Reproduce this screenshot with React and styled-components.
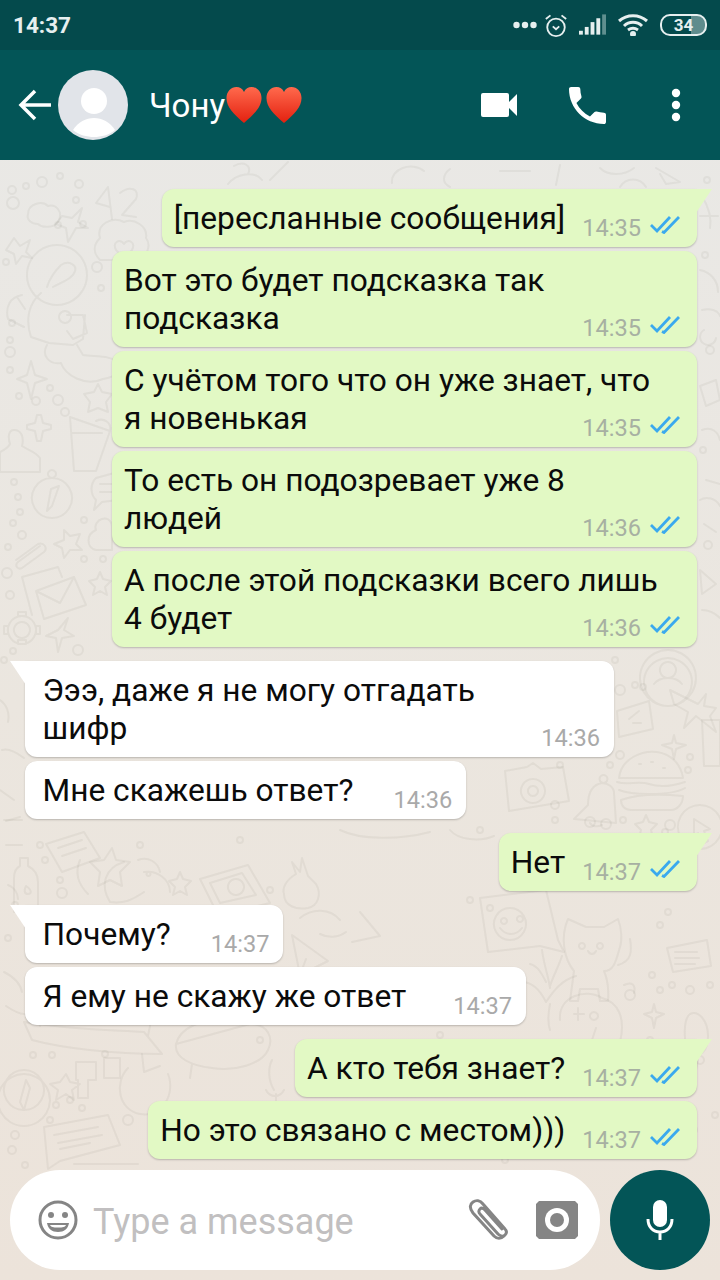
import React from 'react';
import styled, { createGlobalStyle } from 'styled-components';

const GlobalStyle = createGlobalStyle`
  html, body {
    margin: 0;
    padding: 0;
  }
  body {
    width: 720px;
    height: 1280px;
    overflow: hidden;
    font-family: Roboto, "Noto Sans", sans-serif;
  }
`;

const Screen = styled.div`
  position: relative;
  width: 720px;
  height: 1280px;
  display: flex;
  flex-direction: column;
  overflow: hidden;
  background: linear-gradient(180deg, #e9e9e7 0%, #ebe6df 55%, #ece3da 100%);
`;

const StatusBar = styled.div`
  height: 50px;
  flex: none;
  display: flex;
  align-items: center;
  justify-content: space-between;
  padding: 0 13px;
  background: #044a4c;
  color: #e6efef;
  box-sizing: border-box;
`;

const Clock = styled.div`
  font-size: 22.500px;
  font-weight: 700;
`;

const StatusIcons = styled.div`
  display: flex;
  align-items: center;
`;

const Battery = styled.div`
  width: 43px;
  height: 18px;
  margin-left: 12px;
  border: 2px solid #e6efef;
  border-radius: 10px;
  display: flex;
  align-items: center;
  justify-content: center;
  font-size: 17px;
  font-weight: 700;
  background: linear-gradient(90deg, transparent 68%, rgba(230, 239, 239, .4) 68%);
`;

const Header = styled.header`
  height: 110px;
  flex: none;
  display: flex;
  align-items: center;
  padding: 0 39px 0 18px;
  box-sizing: border-box;
  background: #035557;
  color: #fff;
`;

const Avatar = styled.div`
  width: 70px;
  height: 70px;
  margin-left: 7px;
  border-radius: 50%;
  overflow: hidden;
  flex: none;
`;

const Title = styled.div`
  display: flex;
  align-items: center;
  margin-left: 21px;
  font-size: 33px;
  flex: 1;
`;

const HeaderActions = styled.div`
  display: flex;
  align-items: center;
  gap: 52px;
`;

const MoreIcon = styled.svg`
  margin-left: 13px;
`;

const Doodles = styled.svg`
  position: absolute;
  left: 0;
  top: 0;
  pointer-events: none;
`;

const Chat = styled.main`
  position: relative;
  flex: 1;
  display: flex;
  flex-direction: column;
  gap: 4px;
  padding: 29px 23px 0 25px;
  box-sizing: border-box;
`;

const Bubble = styled.div`
  position: relative;
  display: flex;
  flex-direction: ${p => (p.$wide ? 'column' : 'row')};
  align-items: flex-end;
  align-self: ${p => (p.$out ? 'flex-end' : 'flex-start')};
  width: ${p => (p.$wide ? `${p.$wide}px` : 'auto')};
  box-sizing: border-box;
  margin-top: ${p => (p.$gap ? '10px' : '0')};
  padding: 10px 17px 10px 12px;
  padding-left: ${p => (p.$out ? '12px' : '17.500px')};
  background: ${p => (p.$out ? '#e2f9c4' : '#fff')};
  border-radius: 12px;
  border-top-right-radius: ${p => (p.$out && p.$tail ? '0' : '12px')};
  border-top-left-radius: ${p => (!p.$out && p.$tail ? '0' : '12px')};
  box-shadow: 0 1px 2px rgba(0, 0, 0, .22);

  &::before {
    content: ${p => (p.$tail ? "''" : 'none')};
    position: absolute;
    top: 0;
    width: 16px;
    height: 24px;
    background: ${p => (p.$out ? '#e2f9c4' : '#fff')};
    ${p => (p.$out
      ? 'left: 100%; margin-left: -1px; clip-path: polygon(0 0, 100% 0, 0 100%);'
      : 'right: 100%; margin-right: -1px; clip-path: polygon(0 0, 100% 0, 100% 100%);')}
  }
`;

const Text = styled.div`
  align-self: flex-start;
  padding-top: 1px;
  margin-bottom: -1px;
  font-size: 31.700px;
  line-height: 38px;
  color: #0b0b0b;
  white-space: pre-line;
`;

const Meta = styled.div`
  flex: none;
  display: flex;
  align-items: center;
  height: 24px;
  margin-left: ${p => (p.$out ? '17px' : `${p.$space || 40}px`)};
  margin-top: ${p => (p.$wide ? '-24px' : '0')};
  margin-right: ${p => (p.$out ? '0' : '-3px')};
  font-size: 23.600px;
  color: ${p => (p.$out ? '#a7b0a2' : '#a9a9a9')};
`;

const Time = styled.span`
  padding-top: 6px;
`;

const Input = styled.footer`
  position: absolute;
  left: 10px;
  right: 10px;
  bottom: 10px;
  display: flex;
  gap: 10px;
`;

const InputBox = styled.div`
  flex: 1;
  height: 100px;
  display: flex;
  align-items: center;
  padding: 0 22px 0 28px;
  box-sizing: border-box;
  border-radius: 50px;
  background: #fff;
`;

const Placeholder = styled.div`
  flex: 1;
  margin-left: 15px;
  padding-top: 3px;
  font-size: 36px;
  color: #c1bfc0;
`;

const MicButton = styled.div`
  width: 100px;
  height: 100px;
  display: flex;
  align-items: center;
  justify-content: center;
  border-radius: 50%;
  background: #035557;
`;

const Heart = ({ id }) => (
  <svg width="36" height="36" viewBox="0 0 38 36" preserveAspectRatio="none" style={{ marginLeft: 1, marginRight: 3 }}>
    <defs>
      <linearGradient id={id} x1="0" y1="0" x2="0" y2="1">
        <stop offset="0" stopColor="#ff6a4d" />
        <stop offset="1" stopColor="#e3200f" />
      </linearGradient>
    </defs>
    <path d="M19 36C8 27 .5 20 .5 11 .5 4.500 5.500 0 11 0c3.500 0 6.500 1.800 8 5 1.500-3.200 4.500-5 8-5 5.500 0 10.500 4.500 10.500 11 0 9-7.500 16-18.500 25z" fill={`url(#${id})`} />
  </svg>
);

const Ticks = () => (
  <svg width="30" height="18" viewBox="0 0 30 18" style={{ marginLeft: 9 }} fill="none" stroke="#3aa9ee" strokeWidth="2.800">
    <path d="M1 9l6 6L20 1" />
    <path d="M12 15.500l2 1L29 1" />
  </svg>
);

const DOTS = [
  [12, 190, 4], [26, 186, 3], [42, 182, 5], [60, 176, 3], [79, 184, 4], [76, 200, 3], [83, 224, 3], [58, 225, 3],
  [13, 203, 6], [6, 262, 3], [97, 267, 5], [101, 288, 3], [12, 323, 3], [10, 340, 3], [10, 352, 5], [10, 370, 3],
  [19, 396, 3], [36, 401, 4], [58, 400, 5], [65, 412, 4], [50, 388, 3], [14, 482, 3], [18, 497, 3], [20, 512, 3],
  [13, 523, 3], [22, 535, 4], [8, 547, 3], [84, 520, 3], [84, 559, 3], [103, 559, 3], [7, 573, 5], [10, 595, 4],
  [13, 651, 3], [78, 650, 5], [4, 660, 3], [707, 180, 3], [705, 255, 3], [710, 350, 4], [703, 450, 3], [708, 545, 4],
  [615, 660, 3], [635, 685, 3], [643, 687, 3], [620, 690, 5], [620, 755, 4], [560, 765, 3], [610, 765, 3],
  [690, 757, 3], [688, 770, 3], [555, 805, 4], [555, 820, 3], [665, 832, 3], [590, 822, 5], [606, 824, 5],
  [623, 820, 3], [670, 825, 5], [480, 830, 3], [490, 908, 3], [470, 900, 3], [660, 925, 3], [668, 912, 3],
  [660, 990, 3], [672, 985, 3], [652, 975, 3], [690, 990, 4], [710, 985, 3], [630, 995, 5], [650, 1040, 3],
  [40, 845, 3], [45, 860, 3], [60, 880, 3], [62, 893, 5], [140, 845, 3], [105, 1054, 3], [33, 1055, 3],
  [52, 1055, 3], [240, 840, 3], [270, 890, 3], [15, 905, 3], [8, 938, 3], [300, 1060, 3], [56, 1105, 3],
  [70, 1100, 3], [82, 1108, 3], [50, 1120, 3], [15, 1135, 4], [12, 1150, 4], [25, 1165, 3], [128, 1120, 5],
  [260, 1040, 3], [440, 1035, 3], [505, 1160, 3], [700, 1060, 4], [715, 1115, 3], [692, 1130, 5],
];

// each entry is drawn at x, y in page pixels
const SHAPES = [
  // astronaut
  [27, 245, 'M30 0a30 30 0 1 1-.1 0zM20 42c3-10 9-17 14-22 8-5 16 0 14 6-2 8-14 11-22 16M14 48C2 58-2 74 4 92l18 6 24 2 10-6 2-24M-5 50c-12 2-17 12-14 24l16 8M-10 52l8 12M20 100c-6 10 2 20 14 18 4 12 24 24 42 16 14-2 20-10 16-16-8-8-24-6-36-8l-6-10M38 66a6 6 0 1 0 .1 0M40 70h16l4 18-14 6-6-8' ],
  // 42
  [96, 187, 'M12 0L0 16l14 4M12 0l4 32M24 6c10-8 20-4 16 6l-14 16 14 2' ],
  // clouds, stars
  [26, 202, 'M2 12C2 2 16-2 22 4c8-2 16 6 10 16-4 6-16 6-20 2-6 0-12-4-10-10z' ],
  [58, 208, 'M4 8l10 2 10-10-4 14 10 6-12 0-8 14-2-14-10-4z' ],
  [8, 234, 'M6 4l6 8 10-6-4 12 6 6-10-2-6 8-2-10-8-4z' ],
  [96, 220, 'M4 18C0 4 16-4 28 2c10-4 24 4 22 16 6 8 0 18-6 22H4C-4 32-2 24 4 18zM20 30c-4-8 4-12 8-6 4-6 12-2 8 6l-8 8z' ],
  [17, 361, 'M14 0l4 14 12 4-12 4-4 16-4-16-10-4 10-4z' ],
  [88, 384, 'M10 0l4 8 10 2-6 8 2 10-10-4-10 4 2-10-6-8 10-2z' ],
  [27, 415, 'M10 0h4l2 8 8 2v4l-8 2-2 10h-4l-2-10-8-2v-4l8-2z' ],
  [2, 430, 'M12 0c8 0 10 8 8 16 6 4 14 6 18 12v14H-2V22c4-2 8-4 10-8-2-6-2-14 4-14z' ],
  [64, 417, 'M6 0l40 14-14 40H10zM8 16h30M32 4c8-4 16 2 14 10' ],
  // compass, cloud, paperclip, envelopes, gear
  [32, 470, 'M20 8a20 20 0 1 1-.1 0zM20 0a4 4 0 1 1-.1 0zM27 16l-7 20-5 5 4-22z' ],
  [56, 530, 'M8 0l6 6 10-2-4 10 6 6-12 0-6 8-2-10-8-4 10-4z' ],
  [16, 542, 'M0 18L22 2c6-2 10 4 6 8L6 26c-4 2-8-2-4-6L24 4' ],
  [22, 565, 'M0 12l36-10 4 10M10 50L0 12M14 26l38-14 12 28-42 14zM14 26l24 12 14-26' ],
  [92, 572, 'M8 0l3 7 8 2-6 6 2 8-7-4-7 4 2-8-6-6 8-2z' ],
  [8, 612, 'M14 4a14 14 0 1 1-.1 0zM14 10a8 8 0 1 1-.1 0zM10 0h8v4h-8zM10 28h8v4h-8zM-4 14h4v8h-4zM28 14h4v8h-4z' ],
  [46, 618, 'M22 0l-4 12 10 6-12 2-4 14-2-14-10-2 12-6z' ],
  [88, 472, 'M8 6l22-6v28L14 30l-8 8 2-10c-6-6-6-16 0-22zM12 12h14M12 20h14' ],
  [88, 518, 'M8 12C4 2 22-6 24 8v24H8C-2 30-2 16 8 12z' ],
  // top and right edges
  [228, 162, 'M0 22c8-10 26-14 34-4M6 4c10-6 18 0 14 8M60 0l-18 18' ],
  [390, 165, 'M2 18C0 4 22-4 34 6M60 4c-8 6-8 14 0 18M110 6h30M170 0l-4 20M230 22c6-10 20-10 26 0' ],
  [600, 160, 'M0 8c8 8 24 8 34 0M56 8l24 14-14 2-6-10' ],
  [700, 196, 'M2 0c6 10 10 20 8 32M0 20h18' ],
  [700, 270, 'M0 0c10 2 18 10 18 22M2 40c8-2 16 0 18 6M4 60a8 8 0 1 0 12 8' ],
  [700, 380, 'M0 6l16-6 4 20-14 6zM2 50c10-4 16 2 18 10' ],
  [700, 480, 'M6 0l14 4M0 20c6-4 16-2 20 6M4 44l12 8' ],
  [700, 570, 'M0 0l16 14-14 10zM2 40c8 0 14 4 18 8' ],
  // circle with person, plane, note
  [640, 650, 'M28 0a28 28 0 1 1-.1 0zM28 8a24 24 0 1 1-.1 0zM28 12a8 8 0 1 1-.1 0zM14 34c6-8 22-8 28 0' ],
  [676, 690, 'M-6 0l28 14 8-10-2 12 12 2-6 8 6 16-20-16-12 12 4-16-14-8z' ],
  [702, 720, 'M0 0h18v46H2z' ],
  [617, 695, 'M0 16l32-10 4 28-34 8zM12 24l10-8M16 28h8' ],
  [664, 735, 'M10 0l2 8 10 2-10 4-2 10-2-10-10-4 10-2z' ],
  // camera, bell, burger
  [497, 765, 'M8 6l22-4 6-4 8 6 22-2 6 34-60 10zM36 14a12 12 0 1 1-.1 0zM36 21a5 5 0 1 1-.1 0z' ],
  [572, 775, 'M32 0a4 4 0 1 1-1 0zM30 8c-12 2-14 14-14 22L2 44l42 4-2-30c0-6-6-10-12-10zM18 48c2 4 8 4 12 2' ],
  [617, 750, 'M2 28C4 8 26 0 40 2c14 2 24 12 26 26zM0 32c12 4 20-2 32 2s24 2 36-2M2 40c10 4 20 4 30 4s26 0 36-6M4 50c16-6 42-6 62-4 0 8-6 14-12 14H14C8 60 4 56 4 50zM22 14h2M34 12h2M46 18h2' ],
  [676, 805, 'M24 0a22 22 0 1 1-.1 0zM18 14l16 10-6 2 4 10-4 2-6-10-4 4z' ],
  [636, 815, 'M10 0l3 7 8 2-6 6 2 8-7-4-7 4 2-8-6-6 8-2z' ],
  // emoji note, cat, note
  [470, 890, 'M10 8l66-8 12 50 6 12-24-6-52 6zM40 18a16 16 0 1 1-.1 0zM34 28a3 3 0 1 1-.1 0zM50 26a3 3 0 1 1-.1 0zM30 38c6 8 16 8 22 0' ],
  [568, 915, 'M0 4l18 8h18l14-8c4 10 4 22 2 28-4 14-6 24-16 24 6 14 4 30 4 30h-8l-2-12-18 0-2 12h-8l4-30C-4 44-8 22 0 4zM14 28a3 3 0 1 1-.1 0zM32 28a3 3 0 1 1-.1 0zM20 36c2 4 6 4 8 0M50 50c14-4 14-14 12-26M56 70c8-4 12 0 10 8' ],
  [667, 940, 'M0 8l40-8 4 26-38 6zM8 12h22M8 18h24M8 24h20' ],
  [522, 950, 'M20 0c2 16 6 24 8 38M0 32c10 0 18 8 24 20 8-12 16-22 30-26M8 14c8 2 12 10 16 18M40 6c-4 12-8 18-12 30M28 54c-2 10-2 20 0 26' ],
  [550, 990, 'M10 30C8 6 36-2 52 8c16 4 24 20 18 44-2 10-10 12-20 12l-30-6M24 24h10M28 18v12M46 38l-4 12M44 22a4 4 0 1 1-.1 0z' ],
  [644, 1004, 'M10 0l2 8 8 2-8 4-2 10-2-10-8-4 8-2z' ],
  [680, 1010, 'M10 4c-6 4-8 28 0 40 10 4 18-2 18-18S18 0 10 4zM18 50l-4 20' ],
  // lower left
  [46, 832, 'M0 12l38-12 16 26-38 14zM12 16l24-8M16 24l24-8' ],
  [10, 852, 'M10 14v-8h8v8c8 4 10 10 10 16l0 30H4V26c0-6 2-10 6-12zM16 34c-2 4-2 8 2 8s4-4-2-8z' ],
  [98, 848, 'M14 0l4 12 14 2-10 10 2 14-12-6-12 6 2-14-10-10 14-2z' ],
  [78, 860, 'M2 0C-4 14 2 26 10 34M46 2C26 8 22 26 32 42M66 12c14-2 26 8 26 20M32 42c14 2 22-2 34-10M60 0c10-4 20 2 22 12M70 12a2 2 0 1 0 1 0' ],
  [172, 872, 'M8 0l3 7 8 2-6 6 2 8-7-4-7 4 2-8-6-6 8-2z' ],
  [200, 865, 'M0 14l48-14 22 38-52 12zM10 18l32-10 14 22-36 8zM36 14a8 8 0 1 1-.1 0z' ],
  [286, 860, 'M10 14l-4-12 8 10 2-14 6 18 8 8c6 10 2 22-8 24-12 2-24-2-24-14-2-6 2-14 12-20z' ],
  [292, 935, 'M0 0l36 26-28 14zM8 40l6-16' ],
  [22, 1022, 'M2 0c50 8 90 8 120 10l18 22c-50 0-100-6-130-14zM130 -6l-4 20M20 -6l-2 10' ],
  [2, 1070, 'M22 0a20 20 0 1 1-.1 0zM22 4a26 26 0 1 1-.1 0zM24 10l-6 22 4 8 6-22z' ],
  [52, 1060, 'M14 14l4 8 10 2-8 6 2 10-8-6-10 6 2-10-8-6 10-2zM24 2h20v18H36v18H26V20h-2zM52 -2h16v20H52z' ],
  [116, 1060, 'M12 8c-14 14-10 42 12 46 22 4 36-20 28-40M26 -6l2 18 16-6' ],
  [170, 1020, 'M6 24c4-16 26-26 46-22 2-8 14-12 24-2M80 4c18 0 24 14 18 26-6 14-34 22-56 18-20-2-38-10-36-24zM22 44l-2 14' ],
  [262, 1060, 'M10 0c-4 8-4 20 2 30M4 30c4 8 14 8 18 0M14 34v8' ],
  [38, 1115, 'M6 12l64-12 12 30-60 16-12 8zM16 20l44-8M20 28l44-8M22 34l30-6' ],
  [74, 1160, 'M0 4l64 0' ],
  // strips round the other bubbles
  [0, 700, 'M0 0c6 4 10 12 8 22M2 50c6-2 14 2 22 8M0 90l14 10M4 120l18 0' ],
  [6, 815, 'M0 6l14-4M0 30l16 0M2 70c6 2 10 8 10 14' ],
  [4, 972, 'M0 0c8 4 16 10 18 20M2 34c6 4 14 8 18 8' ],
  [340, 830, 'M0 0c20 10 60 10 90 2M110 0c8 10 30 12 44 6' ],
  [300, 908, 'M0 10c12-10 30-10 40 2M20 26c8 4 18 4 26-2M60 4l20 24-28 6' ],
  [400, 1040, 'M0 8c14 8 36 8 50 0M60 26l40-10 10 20' ],
  [560, 1048, 'M0 0c20-6 40-6 60 4M90 16l30 8' ],
  [610, 1110, 'M0 10l34-8 10 36-30 8z' ],
  [490, 1115, 'M2 14c20-10 40-8 60 2M4 30c14 4 24 4 30-2' ],
];

const WallPaper = () => (
  <Doodles width="720" height="1280" viewBox="0 0 720 1280" fill="none" stroke="rgba(70, 60, 50, .06)" strokeWidth="2" strokeLinejoin="round" strokeLinecap="round">
    {DOTS.map(([cx, cy, r]) => <circle key={`${cx}-${cy}`} cx={cx} cy={cy} r={r} />)}
    {SHAPES.map(([x, y, d]) => <path key={`${x}-${y}`} d={d} transform={`translate(${x} ${y})`} />)}
  </Doodles>
);

const messages = [
  { out: true, tail: true, text: '[пересланные сообщения]', time: '14:35' },
  { out: true, wide: 585, text: 'Вот это будет подсказка так\nподсказка', time: '14:35' },
  { out: true, wide: 585, text: 'С учётом того что он уже знает, что\nя новенькая', time: '14:35' },
  { out: true, wide: 585, text: 'То есть он подозревает уже 8\nлюдей', time: '14:36' },
  { out: true, wide: 585, text: 'А после этой подсказки всего лишь\n4 будет', time: '14:36' },
  { tail: true, gap: true, wide: 589, text: 'Эээ, даже я не могу отгадать\nшифр', time: '14:36' },
  { text: 'Мне скажешь ответ?', time: '14:36' },
  { out: true, tail: true, gap: true, text: 'Нет', time: '14:37' },
  { tail: true, gap: true, text: 'Почему?', time: '14:37' },
  { space: 47, text: 'Я ему не скажу же ответ', time: '14:37' },
  { out: true, tail: true, gap: true, text: 'А кто тебя знает?', time: '14:37' },
  { out: true, text: 'Но это связано с местом)))', time: '14:37' },
];

const Message = ({ out, tail, gap, wide, space, text, time }) => (
  <Bubble $out={out} $tail={tail} $gap={gap} $wide={wide}>
    <Text>{text}</Text>
    <Meta $out={out} $wide={wide} $space={space}>
      <Time>{time}</Time>
      {out && <Ticks />}
    </Meta>
  </Bubble>
);

export default function App() {
  return (
    <Screen>
      <GlobalStyle />
      <StatusBar>
        <Clock>14:37</Clock>
        <StatusIcons>
          <svg width="24" height="10" viewBox="0 0 24 10" fill="#e6efef">
            <circle cx="3.500" cy="5" r="3.200" /><circle cx="12" cy="5" r="3.200" /><circle cx="20.500" cy="5" r="3.200" />
          </svg>
          <svg width="24" height="25" viewBox="0 0 26 26" fill="none" stroke="#e6efef" strokeWidth="2" style={{ marginLeft: 7 }}>
            <circle cx="13" cy="15" r="9.500" />
            <path d="M9.500 14l3.500 3 3.500-3M2 6l5-4M24 6l-5-4" />
          </svg>
          <svg width="27" height="22" viewBox="0 0 28 22" fill="#e6efef" style={{ marginLeft: 11 }}>
            <rect x="0" y="17" width="4" height="4" /><rect x="6" y="13" width="4" height="8" />
            <rect x="12" y="8" width="4" height="13" /><rect x="18" y="4" width="4" height="17" />
            <rect x="24" y="0" width="4" height="21" fill="#5f8f8f" />
          </svg>
          <svg width="30" height="22" viewBox="0 0 30 22" fill="none" stroke="#e6efef" strokeWidth="3" style={{ marginLeft: 12 }}>
            <path d="M1 7c8-7 20-7 28 0M6 12c5-5 13-5 18 0M10 16c3-2 7-2 10 0" />
            <circle cx="15" cy="20" r="1.500" fill="#e6efef" />
          </svg>
          <Battery>34</Battery>
        </StatusIcons>
      </StatusBar>
      <Header>
        <svg width="33" height="32" viewBox="0 0 33 32" fill="none" stroke="#fff" strokeWidth="3.500">
          <path d="M33 16H3M17 2L3 16l14 14" />
        </svg>
        <Avatar>
          <svg width="70" height="70" viewBox="0 0 70 70">
            <rect width="70" height="70" fill="#e1e4e9" />
            <circle cx="36" cy="31" r="13" fill="#fff" />
            <path d="M15 60c5-8 13-12 21-12s16 4 21 12c-6 5-14 7-21 7s-15-2-21-7z" fill="#fff" />
          </svg>
        </Avatar>
        <Title>Чону<Heart id="h1" /><Heart id="h2" /></Title>
        <HeaderActions>
          <svg width="36" height="26" viewBox="0 0 36 26" fill="#fff">
            <rect x="0" y="1" width="28" height="24" rx="2" />
            <path d="M28 10l8-8v22l-8-8z" />
          </svg>
          <svg width="37" height="37" viewBox="3 3 18 18" fill="#fff">
            <path d="M6.620 10.790c1.440 2.830 3.760 5.140 6.590 6.590l2.200-2.200c.27-.27.67-.36 1.020-.24 1.120.37 2.330.57 3.570.57.550 0 1 .45 1 1V20c0 .55-.45 1-1 1C10.610 21 3 13.390 3 4c0-.55.45-1 1-1h3.500c.55 0 1 .45 1 1 0 1.250.2 2.450.57 3.570.11.350.03.740-.25 1.020l-2.200 2.200z" />
          </svg>
          <MoreIcon width="10" height="34" viewBox="0 0 10 34" fill="#fff">
            <circle cx="5" cy="5" r="4.200" /><circle cx="5" cy="17" r="4.200" /><circle cx="5" cy="29" r="4.200" />
          </MoreIcon>
        </HeaderActions>
      </Header>
      <WallPaper />
      <Chat>
        {messages.map((m, i) => <Message key={i} {...m} />)}
      </Chat>
      <Input>
        <InputBox>
          <svg width="40" height="40" viewBox="0 0 40 40" fill="none" stroke="#858585" strokeWidth="3">
            <circle cx="20" cy="20" r="18" />
            <circle cx="13" cy="15" r="3" fill="#858585" stroke="none" />
            <circle cx="27" cy="15" r="3" fill="#858585" stroke="none" />
            <path d="M9 23h22c-1 6-5 9-11 9s-10-3-11-9z" fill="#858585" stroke="none" />
            <path d="M12 25h16c-1 2-3 2.500-8 2.500s-7-.5-8-2.500z" fill="#fff" stroke="none" />
          </svg>
          <Placeholder>Type a message</Placeholder>
          <svg width="44" height="42" viewBox="0 0 44 42" fill="none" stroke="#858585" strokeWidth="3" strokeLinecap="round" style={{ marginRight: 24 }}>
            <path d="M36 37c-3 3-7 3-10 0L5 14C1 9 2 5 5 3s7-2 10 2l22 25c2 2 2 4 0 6s-5 1-7-1L12 15c-2-2-1-4 0-5s3-1 5 1l17 19" />
          </svg>
          <svg width="42" height="38" viewBox="0 0 42 38">
            <path d="M3 0h36l3 3v32l-3 3H3l-3-3V3z" fill="#858585" />
            <circle cx="21" cy="19" r="12" fill="#fff" />
            <circle cx="21" cy="19" r="7" fill="#858585" />
          </svg>
        </InputBox>
        <MicButton>
          <svg width="28" height="40" viewBox="0 0 28 40" fill="none">
            <rect x="7" y="0" width="14" height="27" rx="7" fill="#fff" />
            <path d="M2 19c0 8 5 13 12 13s12-5 12-13M14 32v8" stroke="#fff" strokeWidth="3" />
          </svg>
        </MicButton>
      </Input>
    </Screen>
  );
}
